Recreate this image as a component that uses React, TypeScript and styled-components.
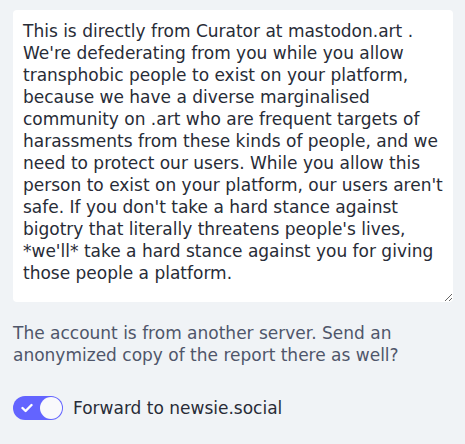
import React, { useState } from 'react';
import styled, { createGlobalStyle } from 'styled-components';

const GlobalStyle = createGlobalStyle`
   html, body {
      margin: 0;
      padding: 0;
      background: #f0f3f6;
   }
   body {
      font-family: 'DejaVu Sans', 'Noto Sans', sans-serif;
   }
`;

const Wrapper = styled.div`
   padding: 10px 12px 0 13px;
   display: flex;
   flex-direction: column;
`;

const Comment = styled.textarea`
   box-sizing: border-box;
   width: 440px;
   height: 292px;
   margin: 0;
   padding: 10px;
   border: 0;
   border-radius: 4px;
   background: #ffffff;
   color: #282c37;
   font-family: 'DejaVu Sans', sans-serif;
   font-size: 17px;
   line-height: 22px;
   resize: vertical;
   outline: none;
   display: block;
`;

const Hint = styled.p`
   margin: 20px 0 0;
   color: #4f566a;
   font-size: 17px;
   line-height: 22px;
`;

const ToggleRow = styled.label`
   display: flex;
   align-items: center;
   gap: 10px;
   margin-top: 30px;
   color: #282c37;
   font-size: 17px;
   line-height: 22px;
   cursor: pointer;
`;

const Track = styled.span<{ $on: boolean }>`
   position: relative;
   display: inline-flex;
   align-items: center;
   width: 50px;
   height: 24px;
   border-radius: 12px;
   background: ${(p) => (p.$on ? '#6364ff' : '#c0c6d4')};
   flex-shrink: 0;
`;

const Knob = styled.span<{ $on: boolean }>`
   position: absolute;
   top: 1px;
   left: ${(p) => (p.$on ? '27px' : '1px')};
   width: 22px;
   height: 22px;
   border-radius: 50%;
   background: #f9f9fc;
`;

const Check = styled.svg`
   position: absolute;
   left: 8px;
   top: 7px;
`;

const text = `This is directly from Curator at mastodon.art . We're defederating from you while you allow transphobic people to exist on your platform, because we have a diverse marginalised community on .art who are frequent targets of harassments from these kinds of people, and we need to protect our users. While you allow this person to exist on your platform, our users aren't safe. If you don't take a hard stance against bigotry that literally threatens people's lives, *we'll* take a hard stance against you for giving those people a platform.`;

export default function App(): React.ReactElement {
   const [forward, setForward] = useState(true);
   const [comment, setComment] = useState(text);

   return (
      <>
         <GlobalStyle />
         <Wrapper>
            <Comment value={comment} onChange={(e) => setComment(e.target.value)} />
            <Hint>
               The account is from another server. Send an anonymized copy of
               the report there as well?
            </Hint>
            <ToggleRow onClick={() => setForward(!forward)}>
               <Track $on={forward}>
                  {forward && (
                     <Check width="12" height="10" viewBox="0 0 12 10">
                        <path
                           d="M1.5 5 L4.6 8 L10.5 2"
                           fill="none"
                           stroke="#fff"
                           strokeWidth="2.4"
                           strokeLinecap="round"
                           strokeLinejoin="round"
                        />
                     </Check>
                  )}
                  <Knob $on={forward} />
               </Track>
               Forward to newsie.social
            </ToggleRow>
         </Wrapper>
      </>
   );
}
